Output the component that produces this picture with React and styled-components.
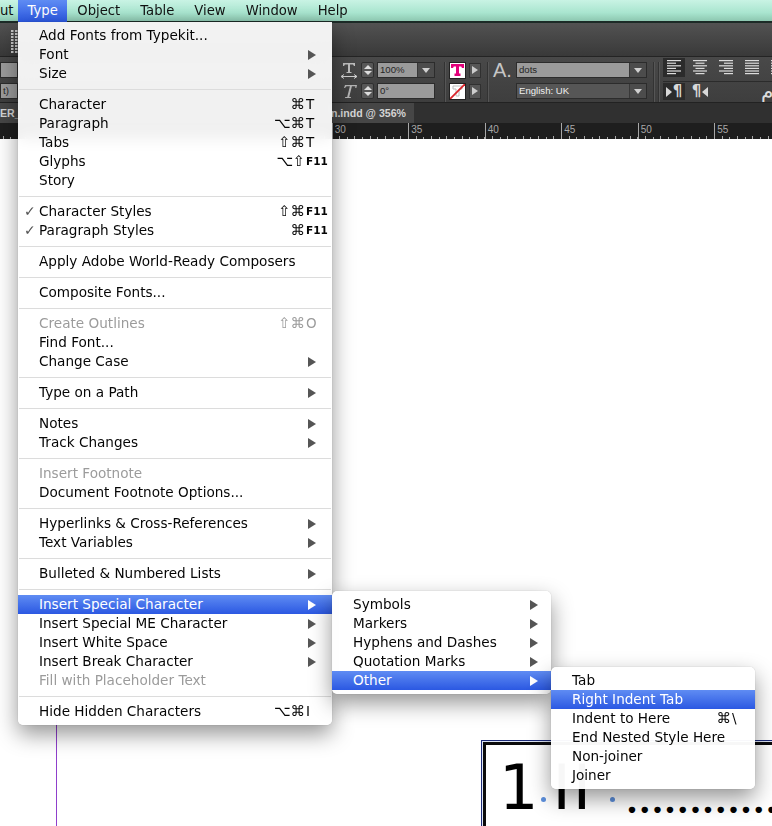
import React from "react";
import styled, { createGlobalStyle } from "styled-components";

const GlobalStyle = createGlobalStyle`
  html, body {
    margin: 0;
    padding: 0;
    background: #fff;
  }
  #root {
    width: 772px;
    height: 826px;
  }
`;

const uiFont = `"DejaVu Sans", "Noto Sans", sans-serif`;
const smallFont = `"Liberation Sans", Arial, sans-serif`;

const Page = styled.div`
  position: relative;
  width: 772px;
  height: 826px;
  overflow: hidden;
  display: flex;
  flex-direction: column;
  font-family: ${uiFont};
  background: #fff;
`;

/* menu bar */

const MenuBar = styled.div`
  position: relative;
  z-index: 10;
  flex: none;
  height: 23px;
  display: flex;
  align-items: flex-start;
  background: linear-gradient(180deg, #c9f3e4 0%, #a9e5cf 55%, #86c0a9 100%);
  box-shadow: inset 0 -2px 0 #1c2b27;
  color: #111;
  font-size: 13.2px;
`;

const MenuTitle = styled.div`
  position: relative;
  height: 22px;
  line-height: 21px;
  padding: 0 ${(p) => (p.$open ? 9.5 : 10)}px;
  color: ${(p) => (p.$open ? "#fff" : "#111")};
  background: ${(p) => (p.$open ? "linear-gradient(180deg, #5f8cf3, #2b58e2)" : "none")};
`;

const CutTitle = styled(MenuTitle)`
  width: 18px;
  box-sizing: border-box;
  padding: 0;
`;

/* menus */

const Panel = styled.div`
  --trail: ${(p) => p.$trail}px;
  position: absolute;
  top: ${(p) => (p.$sub ? "-4px" : "100%")};
  left: ${(p) => (p.$sub ? "100%" : "0")};
  width: ${(p) => p.$width}px;
  box-sizing: border-box;
  padding: 4px 0;
  background: rgba(255, 255, 255, ${(p) => (p.$sub ? 0.97 : 0.93)});
  backdrop-filter: ${(p) => (p.$sub ? "none" : "blur(8px)")};
  border-radius: ${(p) => (p.$sub ? "5px" : "0 0 5px 5px")};
  box-shadow: 0 9px 22px rgba(0, 0, 0, 0.42), 0 0 1px rgba(0, 0, 0, 0.35);
  font-size: 13.6px;
  font-weight: 400;
`;

const Row = styled.div`
  position: relative;
  display: grid;
  grid-template-columns: 21px 1fr auto var(--trail);
  align-items: center;
  height: 19px;
  line-height: 19px;
  white-space: nowrap;
  color: ${(p) => (p.$active ? "#fff" : p.$disabled ? "#9b9b9b" : "#050505")};
  background: ${(p) => (p.$active ? "linear-gradient(180deg, #5f8cf3, #2b58e2)" : "none")};
`;

const Check = styled.span`
  font-size: 14px;
  color: #555;
  padding-left: 6px;
`;

const Mods = styled.span`
  text-align: right;
  font-size: 14.5px;
`;

const Key = styled.span`
  padding-left: 1px;
  font-size: ${(p) => (p.$small ? "10.5px" : "13.5px")};
  font-weight: ${(p) => (p.$small ? 700 : 400)};
`;

const Arrow = styled.span`
  display: block;
  width: 0;
  height: 0;
  margin-left: 3px;
  border-style: solid;
  border-width: 5px 0 5px 8px;
  border-color: transparent transparent transparent ${(p) => (p.$active ? "#fff" : "#555")};
`;

const Separator = styled.div`
  height: 1px;
  margin: 5.5px 1px;
  background: #dcdcdc;
`;

const typeMenu = [
  [
    { label: "Add Fonts from Typekit..." },
    { label: "Font", arrow: true },
    { label: "Size", arrow: true },
  ],
  [
    { label: "Character", mods: "⌘", key: "T" },
    { label: "Paragraph", mods: "⌥⌘", key: "T" },
    { label: "Tabs", mods: "⇧⌘", key: "T" },
    { label: "Glyphs", mods: "⌥⇧", key: "F11" },
    { label: "Story" },
  ],
  [
    { label: "Character Styles", check: true, mods: "⇧⌘", key: "F11" },
    { label: "Paragraph Styles", check: true, mods: "⌘", key: "F11" },
  ],
  [{ label: "Apply Adobe World-Ready Composers" }],
  [{ label: "Composite Fonts..." }],
  [
    { label: "Create Outlines", disabled: true, mods: "⇧⌘", key: "O" },
    { label: "Find Font..." },
    { label: "Change Case", arrow: true },
  ],
  [{ label: "Type on a Path", arrow: true }],
  [
    { label: "Notes", arrow: true },
    { label: "Track Changes", arrow: true },
  ],
  [
    { label: "Insert Footnote", disabled: true },
    { label: "Document Footnote Options..." },
  ],
  [
    { label: "Hyperlinks & Cross-References", arrow: true },
    { label: "Text Variables", arrow: true },
  ],
  [{ label: "Bulleted & Numbered Lists", arrow: true }],
  [
    { label: "Insert Special Character", arrow: true, active: true, sub: "special" },
    { label: "Insert Special ME Character", arrow: true },
    { label: "Insert White Space", arrow: true },
    { label: "Insert Break Character", arrow: true },
    { label: "Fill with Placeholder Text", disabled: true },
  ],
  [{ label: "Hide Hidden Characters", mods: "⌥⌘", key: "I" }],
];

const otherMenu = [
  [
    { label: "Tab" },
    { label: "Right Indent Tab", active: true },
    { label: "Indent to Here", mods: "⌘", key: "\\" },
    { label: "End Nested Style Here" },
    { label: "Non-joiner" },
    { label: "Joiner" },
  ],
];

const specialMenu = [
  [
    { label: "Symbols", arrow: true },
    { label: "Markers", arrow: true },
    { label: "Hyphens and Dashes", arrow: true },
    { label: "Quotation Marks", arrow: true },
    { label: "Other", arrow: true, active: true, sub: "other" },
  ],
];

const subMenus = {
  special: { sections: specialMenu, width: 219 },
  other: { sections: otherMenu, width: 204 },
};

const Menu = ({ sections, width, trail, sub }) => (
  <Panel $width={width} $trail={trail} $sub={sub}>
    {sections.map((items, i) => (
      <React.Fragment key={i}>
        {i > 0 && <Separator />}
        {items.map((item) => (
          <Row key={item.label} $active={item.active} $disabled={item.disabled}>
            {item.check ? <Check>✓</Check> : <span />}
            <span>{item.label}</span>
            <Mods>{item.mods}</Mods>
            {item.arrow ? (
              <Arrow $active={item.active} />
            ) : (
              <Key $small={item.key && item.key.length > 1}>{item.key}</Key>
            )}
            {item.sub && <Menu {...subMenus[item.sub]} trail={24} sub />}
          </Row>
        ))}
      </React.Fragment>
    ))}
  </Panel>
);

/* application toolbar */

const TopRow = styled.div`
  flex: none;
  height: 34px;
  box-sizing: border-box;
  padding: 7px 0 0 11px;
  background: linear-gradient(180deg, #525252, #393939);
  border-bottom: 1px solid #242424;
`;

const ControlRow = styled.div`
  flex: none;
  height: 46px;
  box-sizing: border-box;
  padding-top: 5px;
  display: flex;
  align-items: flex-start;
  background: linear-gradient(180deg, #494949, #3e3e3e);
  border-bottom: 1px solid #222;
  overflow: hidden;
`;

const Group = styled.div`
  flex: none;
  width: ${(p) => p.$width}px;
  margin-left: ${(p) => p.$left || 0}px;
  display: grid;
  grid-template-columns: ${(p) => p.$columns};
  grid-auto-rows: 16px;
  row-gap: 5px;
  column-gap: ${(p) => p.$gap || 3}px;
  align-items: center;
`;

const Divider = styled.div`
  flex: none;
  width: 1px;
  height: 40px;
  margin-left: ${(p) => p.$left}px;
  background: #333;
  border-right: 1px solid #565656;
`;

const Field = styled.div`
  display: flex;
  align-items: stretch;
  height: 16px;
  box-sizing: border-box;
  padding-left: 2px;
  border: 1px solid #2c2c2c;
  background: ${(p) => (p.$dark ? "#565656" : "#9b9b9b")};
  color: ${(p) => (p.$dark ? "#eee" : "#262626")};
  font-family: ${smallFont};
  font-size: 9.6px;
  line-height: 14px;
`;

const FieldText = styled.span`
  flex: 1;
`;

const Caret = styled.span`
  flex: none;
  width: 16px;
  display: flex;
  align-items: center;
  justify-content: center;
  background: #4c4c4c;
  border-left: 1px solid #383838;
  &::after {
    content: "";
    border-style: solid;
    border-width: 5px 4px 0;
    border-color: #d0d0d0 transparent transparent;
  }
`;

const Spinner = styled.div`
  height: 14px;
  display: flex;
  flex-direction: column;
  align-items: center;
  justify-content: center;
  gap: 2px;
  background: #575757;
  border: 1px solid #2f2f2f;
  border-radius: 2px;
  &::before,
  &::after {
    content: "";
    border-style: solid;
    border-color: transparent;
  }
  &::before {
    border-width: 0 4px 4px;
    border-bottom-color: #ddd;
  }
  &::after {
    border-width: 4px 4px 0;
    border-top-color: #ddd;
  }
`;

const Swatch = styled.div`
  width: 17px;
  height: 17px;
  background: #fff;
  border: 1px solid #222;
  box-sizing: border-box;
  display: flex;
  align-items: center;
  justify-content: center;
`;

const SwatchButton = styled.div`
  width: 12px;
  height: 15px;
  display: flex;
  align-items: center;
  justify-content: center;
  background: #565656;
  border: 1px solid #303030;
  box-sizing: border-box;
  &::after {
    content: "";
    border-style: solid;
    border-width: 4px 0 4px 6px;
    border-color: transparent transparent transparent #ccc;
  }
`;

const StyleMark = styled.div`
  font-size: 20px;
  line-height: 16px;
  color: #c6c6c6;
  font-family: ${smallFont};
  white-space: nowrap;
`;

const AlignColumn = styled.div`
  flex: 1;
  min-width: 0;
  margin-left: 3px;
  margin-top: -4px;
`;

const ButtonRow = styled.div`
  display: flex;
  align-items: flex-start;
  gap: 4px;
  height: ${(p) => p.$height}px;
  border-bottom: ${(p) => (p.$ruled ? "1px solid #2b2b2b" : "none")};
  padding-top: ${(p) => p.$top || 0}px;
`;

const ToolButton = styled.div`
  flex: none;
  width: 22px;
  height: ${(p) => p.$height || 19}px;
  display: flex;
  align-items: center;
  justify-content: center;
  gap: 1px;
  background: ${(p) => (p.$selected ? "#2b2b2b" : "none")};
  color: #d8d8d8;
  font-size: 15px;
  line-height: 17px;
  font-weight: 700;
`;

const ArabicMark = styled.span`
  margin-left: 46px;
  color: #ddd;
  font-size: 20px;
  line-height: 17px;
`;

const ParaArrow = styled.span`
  flex: none;
  border-style: solid;
  border-color: transparent;
  border-width: 5px 0 5px 6px;
  border-left-color: #d8d8d8;
  transform: ${(p) => (p.$flip ? "scaleX(-1)" : "none")};
`;

/* document tab and ruler */

const TabBar = styled.div`
  flex: none;
  height: 20px;
  display: flex;
  background: #303030;
`;

const DocTab = styled.div`
  width: 414px;
  box-sizing: border-box;
  padding: 0 8px 0 0;
  display: flex;
  justify-content: space-between;
  align-items: center;
  background: #464646;
  color: #d4d4d4;
  font-family: ${smallFont};
  font-size: 10.6px;
  font-weight: 700;
`;

const RulerBar = styled.div`
  flex: none;
  height: 16px;
  background: #1e1e1e;
`;

const Ruler = styled.svg`
  display: block;
`;

/* the page behind the menus */

const Canvas = styled.div`
  position: relative;
  flex: 1;
  background: #fff;
`;

const Guide = styled.div`
  position: absolute;
  left: 56px;
  top: 0;
  bottom: 0;
  width: 1px;
  background: #8f3fcb;
`;

const TextFrame = styled.div`
  position: absolute;
  left: 481px;
  top: 601px;
  width: 340px;
  height: 140px;
  box-sizing: border-box;
  border: 1px solid #1d2c78;
  padding: 1px;
  background: #dde4f5;
`;

const FrameInner = styled.div`
  height: 100%;
  box-sizing: border-box;
  border: 3px solid #0b0b0b;
  padding-left: 13px;
  display: flex;
  align-items: flex-start;
  font-family: ${uiFont};
  color: #000;
  background: #fff;
  white-space: nowrap;
`;

const Numeral = styled.span`
  font-size: 62px;
  line-height: 62px;
  margin-top: 12px;
  letter-spacing: ${(p) => p.$spacing || 0}px;
  margin-left: ${(p) => p.$left || 0}px;
`;

const Handle = styled.span`
  flex: none;
  width: 5px;
  height: 5px;
  margin-top: 52px;
  margin-left: ${(p) => p.$left}px;
  border-radius: 50%;
  background: #5c8fdc;
`;

const Leader = styled.span`
  margin-left: 12px;
  margin-top: 27px;
  font-family: "Lato", sans-serif;
  font-size: 42px;
  line-height: 50px;
  font-weight: 700;
  letter-spacing: 2.7px;
`;

const AlignIcon = ({ kind }) => {
  const widths = kind === "justify" ? [14, 14, 14, 14, 14, 14] : [14, 9, 14, 9, 14, 9];
  return (
    <svg width="14" height="15" viewBox="0 0 14 15">
      {widths.map((w, i) => {
        const x = kind === "right" ? 14 - w : kind === "center" ? (14 - w) / 2 : 0;
        return <rect key={i} x={x} y={i * 2.6} width={w} height="1.2" fill="#dcdcdc" />;
      })}
    </svg>
  );
};

const ScaleIcon = () => (
  <svg width="18" height="17" viewBox="0 0 18 17">
    <path d="M3 1h12v3h-1l-1-1.500H10V10h1.500v1h-5v-1H8V2.500H5L4 4H3z" fill="#bdbdbd" />
    <path d="M1 14.500h16M1 14.500l3-2M1 14.500l3 2M17 14.500l-3-2M17 14.500l-3 2" stroke="#cfcfcf" fill="none" />
  </svg>
);

const ItalicIcon = () => (
  <svg width="18" height="15" viewBox="0 0 18 15">
    <path d="M5 1h12l-.7 3h-1l.1-1.700h-3.500L9.200 13H11l-.2 1H5l.2-1h2l2.700-10.700H6.500L5 4H4z" fill="#b4b4b4" />
  </svg>
);

const PinkT = () => (
  <svg width="13" height="12" viewBox="0 0 13 12">
    <path d="M0 0h13v4h-2l-.8-1.500H8V9.500h1.500V12h-6V9.500H5V2.500H2.800L2 4H0z" fill="#e2007a" />
  </svg>
);

const NoneT = () => (
  <svg width="15" height="15" viewBox="0 0 15 15">
    <path d="M3 2h9v3H9v7H6V5H3z" fill="none" stroke="#bbb" />
    <path d="M0 15L15 0" stroke="#d8232a" strokeWidth="1.800" />
  </svg>
);

const DottedIcon = () => (
  <svg width="7" height="24" viewBox="0 0 7 24">
    {[0, 3, 6, 9, 12, 15, 18, 21].map((y) => (
      <path key={y} d={`M0 ${y}h2.500v2H0zM4 ${y}h2.500v2H4z`} fill="#c8c8c8" />
    ))}
  </svg>
);

const rulerTicks = Array.from({ length: 102 }, (_, i) => i * 7.65 + 2.5);
const rulerLabels = [
  { x: 331.8, text: "30" },
  { x: 408.3, text: "35" },
  { x: 484.8, text: "40" },
  { x: 561.3, text: "45" },
  { x: 637.8, text: "50" },
  { x: 714.3, text: "55" },
];

export default function App() {
  return (
    <Page>
      <GlobalStyle />
      <MenuBar>
        <CutTitle>ut</CutTitle>
        <MenuTitle $open>
          Type
          <Menu sections={typeMenu} width={314} trail={27} />
        </MenuTitle>
        <MenuTitle>Object</MenuTitle>
        <MenuTitle>Table</MenuTitle>
        <MenuTitle>View</MenuTitle>
        <MenuTitle>Window</MenuTitle>
        <MenuTitle>Help</MenuTitle>
      </MenuBar>

      <TopRow>
        <DottedIcon />
      </TopRow>

      <ControlRow>
        <Group $width={18} $columns="18px">
          <Field />
          <Field>t)</Field>
        </Group>
        <Group $left={322} $width={95} $columns="18px 13px 58px">
          <ScaleIcon />
          <Spinner />
          <Field>
            <FieldText>100%</FieldText>
            <Caret />
          </Field>
          <ItalicIcon />
          <Spinner />
          <Field>0°</Field>
        </Group>
        <Divider $left={9} />
        <Group $left={3} $width={32} $columns="17px 12px">
          <Swatch>
            <PinkT />
          </Swatch>
          <SwatchButton />
          <Swatch>
            <NoneT />
          </Swatch>
          <SwatchButton />
        </Group>
        <Divider $left={6} />
        <Group $left={4} $width={154} $columns="20px 131px">
          <StyleMark>A.</StyleMark>
          <Field>
            <FieldText>dots</FieldText>
            <Caret />
          </Field>
          <span />
          <Field $dark>
            <FieldText>English: UK</FieldText>
            <Caret />
          </Field>
        </Group>
        <Divider $left={6} />
        <Divider $left={3} />
        <AlignColumn>
          <ButtonRow $height={23} $ruled>
            <ToolButton $selected>
              <AlignIcon kind="left" />
            </ToolButton>
            <ToolButton>
              <AlignIcon kind="center" />
            </ToolButton>
            <ToolButton>
              <AlignIcon kind="right" />
            </ToolButton>
            <ToolButton>
              <AlignIcon kind="justify" />
            </ToolButton>
            <ToolButton>
              <AlignIcon kind="justify" />
            </ToolButton>
          </ButtonRow>
          <ButtonRow $height={18} $top={1}>
            <ToolButton $selected $height={17}>
              <ParaArrow />¶
            </ToolButton>
            <ToolButton $height={17}>
              ¶<ParaArrow $flip />
            </ToolButton>
            <ArabicMark>م</ArabicMark>
          </ButtonRow>
        </AlignColumn>
      </ControlRow>

      <TabBar>
        <DocTab>
          <span>ER_</span>
          <span>n.indd @ 356%</span>
        </DocTab>
      </TabBar>

      <RulerBar>
        <Ruler width="772" height="16" viewBox="0 0 772 16">
          {rulerTicks.map((x, i) => (
            <rect key={i} x={Math.round(x)} y={i % 2 ? 14 : 13} width="1" height={i % 2 ? 2 : 3} fill="#a8a8a8" />
          ))}
          {rulerLabels.map((l) => (
            <React.Fragment key={l.text}>
              <rect x={Math.round(l.x)} y="0" width="1" height="16" fill="#a8a8a8" />
              <text x={l.x + 3} y="10" fontSize="10" fill="#a8a8a8" fontFamily="Liberation Sans, sans-serif">
                {l.text}
              </text>
            </React.Fragment>
          ))}
        </Ruler>
      </RulerBar>

      <Canvas>
        <Guide />
        <TextFrame>
          <FrameInner>
            <Numeral>1</Numeral>
            <Handle $left={3} />
            <Numeral $spacing={2} $left={6}>
              II
            </Numeral>
            <Handle $left={17} />
            <Leader>..............</Leader>
          </FrameInner>
        </TextFrame>
      </Canvas>
    </Page>
  );
}
